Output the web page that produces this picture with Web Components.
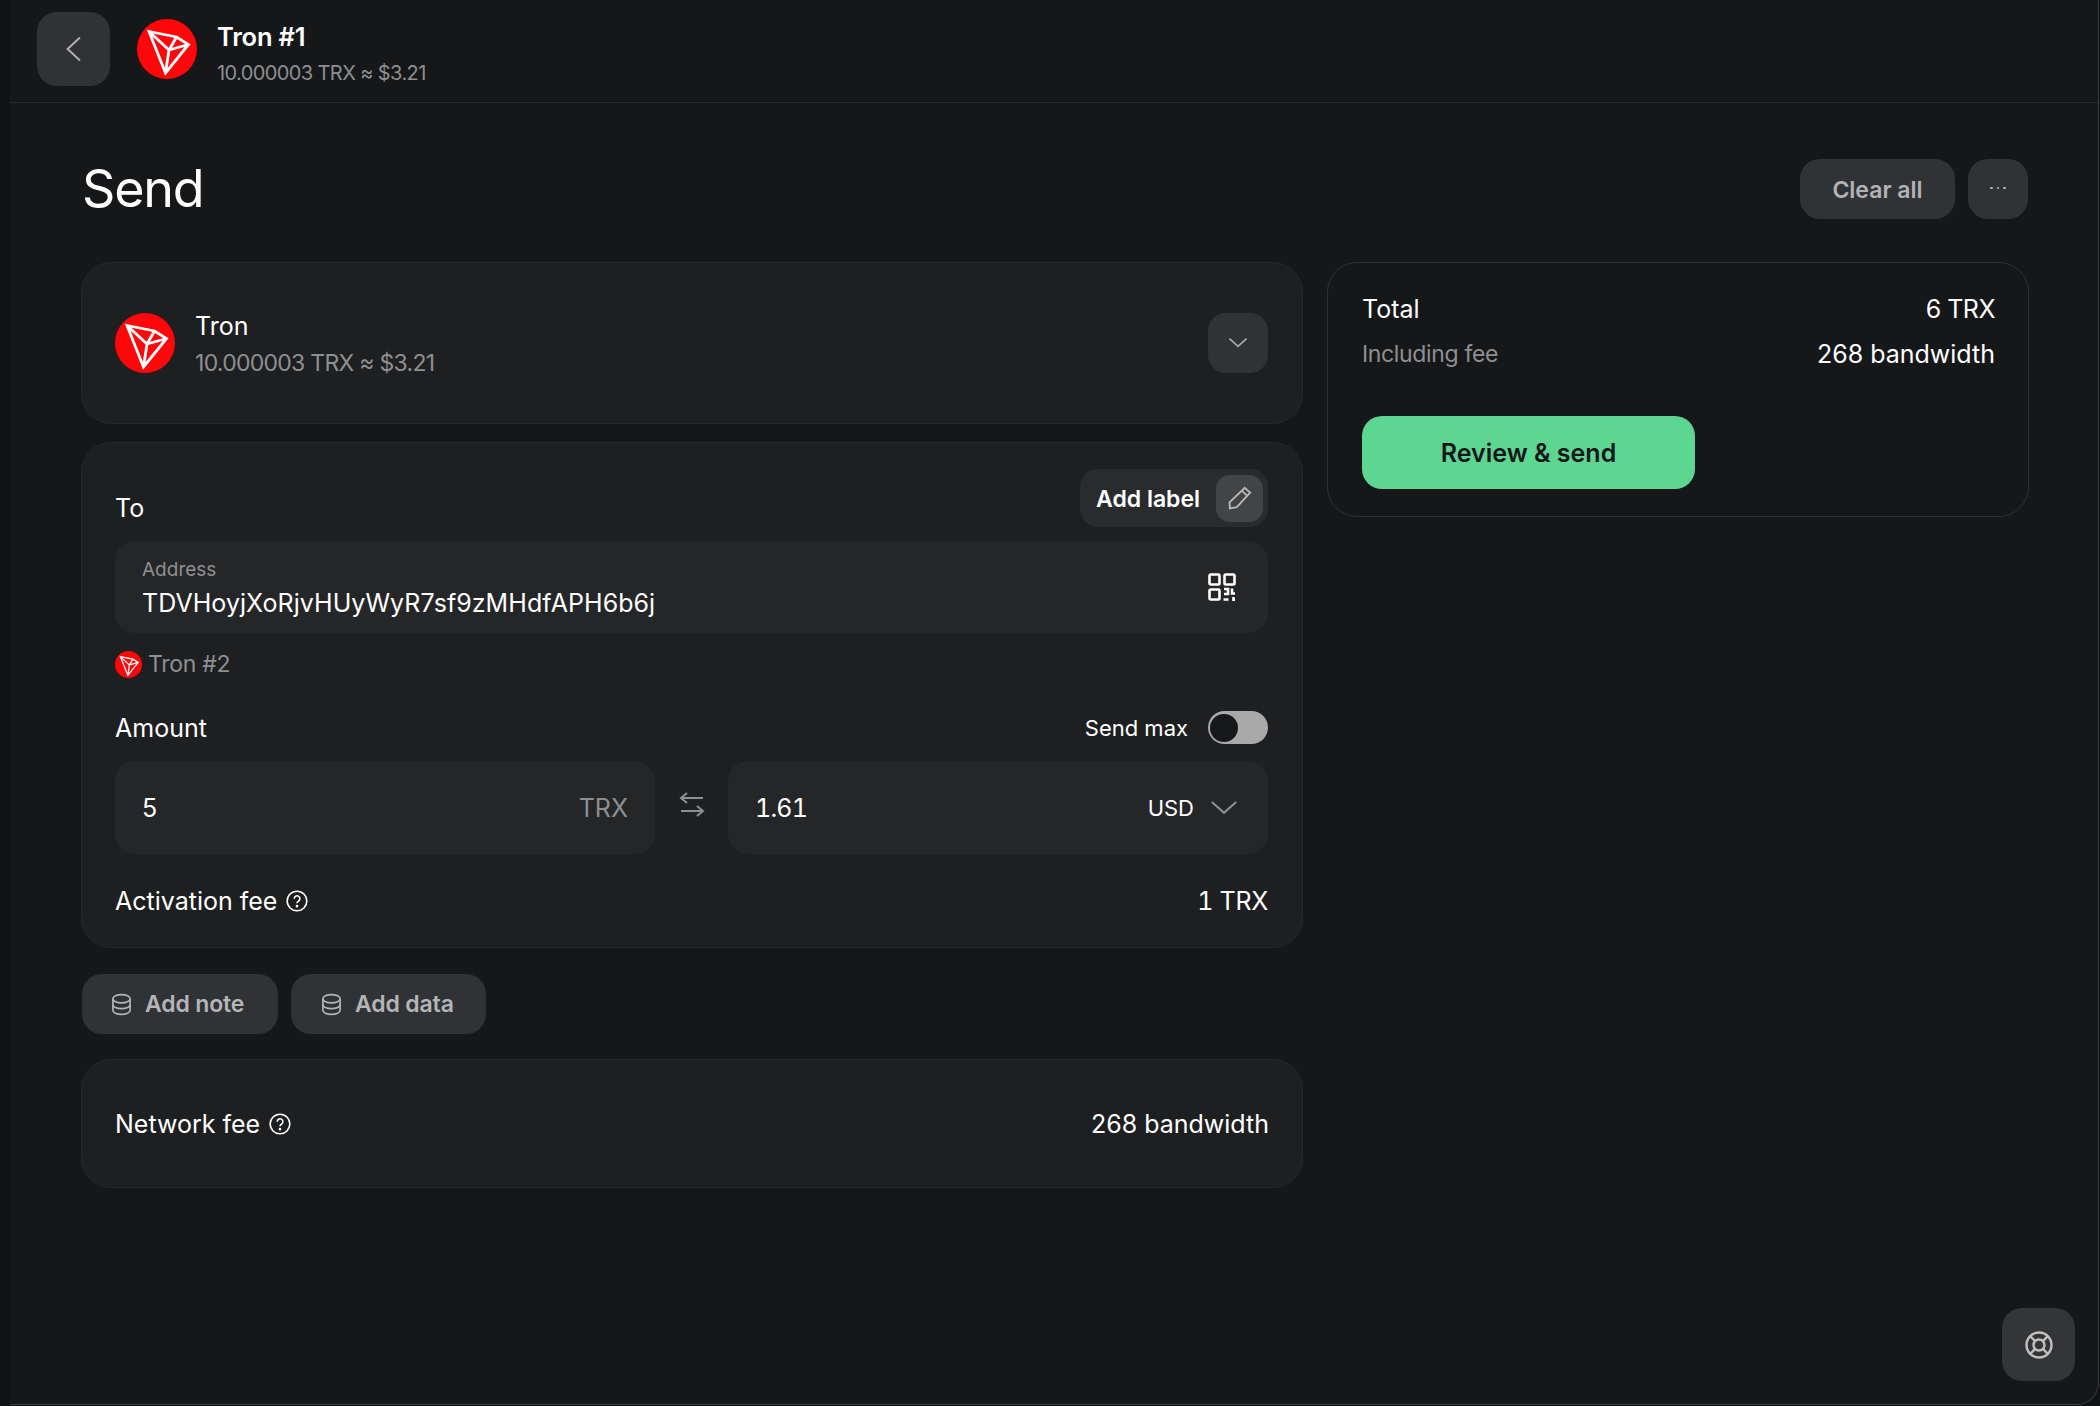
<!DOCTYPE html>
<html>
<head>
<meta charset="utf-8">
<title>Send</title>
<style>
  html, body { margin: 0; height: 100%; background: #101113; }
  body { font-family: Inter, "Liberation Sans", sans-serif; color: #fff; overflow: hidden; }
</style>
</head>
<body>
<wallet-window>
  <account-bar title="Tron #1" sub="10.000003 TRX ≈ $3.21"></account-bar>
  <send-header></send-header>
  <send-columns>
    <token-card slot="main" name="Tron" sub="10.000003 TRX ≈ $3.21"></token-card>
    <recipient-card slot="main"></recipient-card>
    <chip-row slot="main"></chip-row>
    <fee-card slot="main" label="Network fee" value="268 bandwidth"></fee-card>
    <summary-card slot="side"></summary-card>
  </send-columns>
  <help-button></help-button>
</wallet-window>

<script>
// icons
const ICONS = {
  back: '<path d="M20 2.500 7.500 14 20 25.500"/>',
  down: '<path d="M4 9l10 9 10-9"/>',
  pencil: '<path d="M18.500 4.500l5 4.500L11 22.500l-6.500 1.200-.3-5.700z"/><path d="M15.800 7.300l5 4.700"/>',
  qr: '<rect x="1.500" y="1.500" width="10" height="10" rx="1.200"/><rect x="16.500" y="1.500" width="10" height="10" rx="1.200"/><rect x="1.500" y="16.500" width="10" height="10" rx="1.200"/><path d="M16 16h4v5h-4M24 15.500v5h3M15.500 26.500h5M25.500 24v3h1.500"/>',
  swap: '<path d="M25 7H3M9 2 3 7l6 5"/><path d="M3 20h22M19 15l6 5-6 5"/>',
  help: '<circle cx="14" cy="14" r="12.500"/><path d="M10.500 11a3.600 3.600 0 1 1 5.600 3c-1.400.9-2.100 1.500-2.100 3"/><circle cx="14" cy="20.600" r=".7"/>',
  stack: '<ellipse cx="14" cy="7" rx="10.500" ry="5"/><path d="M3.500 7v14c0 2.800 4.700 5 10.500 5s10.500-2.200 10.500-5V7"/><path d="M3.500 14c0 2.800 4.700 5 10.500 5s10.500-2.200 10.500-5"/>',
  buoy: '<circle cx="14" cy="14" r="12.500"/><circle cx="14" cy="14" r="5.500"/><path d="M5.200 5.200l4.900 4.900M22.800 5.200l-4.900 4.900M5.200 22.800l4.900-4.900M22.800 22.800l-4.900-4.900"/>'
};

class UiIcon extends HTMLElement {
  connectedCallback() {
    const s = this.getAttribute('size') || 28;
    const w = this.getAttribute('weight') || 2;
    this.attachShadow({mode: 'open'}).innerHTML = `
      <style>
        :host { display: inline-flex; flex: none; color: inherit; }
        svg { display: block; fill: none; stroke: currentColor; stroke-width: ${w}; }
      </style>
      <svg width="${s}" height="${s}" viewBox="0 0 28 28">${ICONS[this.getAttribute('name')]}</svg>`;
  }
}
customElements.define('ui-icon', UiIcon);

class TronLogo extends HTMLElement {
  connectedCallback() {
    const s = this.getAttribute('size') || 60;
    this.attachShadow({mode: 'open'}).innerHTML = `
      <style>
        :host { display: inline-flex; flex: none; }
        svg { display: block; }
      </style>
      <svg width="${s}" height="${s}" viewBox="0 0 60 60">
        <circle cx="30" cy="30" r="30" fill="#ff060a"/>
        <g fill="none" stroke="#fff" stroke-width="2.800" stroke-linejoin="miter">
          <path d="M12 12.500 39.500 18 51.500 25.500 28.500 54z"/>
          <path d="M12 12.500 32 31 28.500 54"/>
          <path d="M32 31 39.500 18M32 31 51.500 25.500"/>
        </g>
      </svg>`;
  }
}
customElements.define('tron-logo', TronLogo);

class WalletWindow extends HTMLElement {
  constructor() {
    super();
    this.attachShadow({mode: 'open'}).innerHTML = `
      <style>
        :host {
          display: block;
          position: relative;
          box-sizing: border-box;
          height: 1405px;
          margin-left: 10px;
          width: 2089px;
          background: #161719;
          border-right: 1px solid #3a3b3d;
          border-bottom: 1px solid #3a3b3d;
          border-bottom-right-radius: 22px;
        }
      </style>
      <slot></slot>`;
  }
}
customElements.define('wallet-window', WalletWindow);

class AccountBar extends HTMLElement {
  connectedCallback() {
    this.attachShadow({mode: 'open'}).innerHTML = `
      <style>
        :host {
          display: flex;
          align-items: center;
          box-sizing: border-box;
          height: 103px;
          padding: 0 0 4px 27px;
          border-bottom: 1px solid #2a2b2d;
        }
        .back {
          width: 73px; height: 74px;
          border-radius: 20px;
          background: #313235;
          color: #b4b4b5;
          display: flex; align-items: center; justify-content: center;
        }
        tron-logo { margin-left: 27px; }
        .text { margin-left: 20px; padding-top: 9px; }
        .title { font-size: 25.500px; font-weight: 600; line-height: 32px; letter-spacing: -.2px; }
        .sub { font-size: 20px; line-height: 26px; margin-top: 7px; color: #8e8f91; letter-spacing: -.6px; }
      </style>
      <div class="back"><ui-icon name="back" size="28" weight="1.800"></ui-icon></div>
      <tron-logo></tron-logo>
      <div class="text">
        <div class="title">${this.getAttribute('title')}</div>
        <div class="sub">${this.getAttribute('sub')}</div>
      </div>`;
  }
}
customElements.define('account-bar', AccountBar);

class SendHeader extends HTMLElement {
  constructor() {
    super();
    this.attachShadow({mode: 'open'}).innerHTML = `
      <style>
        :host {
          display: flex;
          align-items: center;
          justify-content: space-between;
          box-sizing: border-box;
          height: 159px;
          padding: 13px 70px 0 72px;
        }
        h1 { margin: 0; font-size: 52px; font-weight: 400; line-height: 64px; letter-spacing: -1.200px; }
        .actions { display: flex; gap: 13px; }
        .btn {
          height: 60px;
          border-radius: 20px;
          background: #313235;
          color: #b2b3b4;
          font-size: 23px;
          font-weight: 600;
          display: flex; align-items: center; justify-content: center;
        }
        .clear { width: 155px; padding-top: 1px; box-sizing: border-box; }
        .more { width: 60px; padding-bottom: 2px; box-sizing: border-box; gap: 4px; }
        .more i { width: 2.500px; height: 2.500px; border-radius: 50%; background: #b2b3b4; }
      </style>
      <h1>Send</h1>
      <div class="actions">
        <div class="btn clear">Clear all</div>
        <div class="btn more"><i></i><i></i><i></i></div>
      </div>`;
  }
}
customElements.define('send-header', SendHeader);

class SendColumns extends HTMLElement {
  constructor() {
    super();
    this.attachShadow({mode: 'open'}).innerHTML = `
      <style>
        :host {
          display: grid;
          grid-template-columns: 1222px 702px;
          column-gap: 24px;
          align-items: start;
          padding-left: 71px;
        }
        .main { display: flex; flex-direction: column; }
      </style>
      <div class="main"><slot name="main"></slot></div>
      <div class="side"><slot name="side"></slot></div>`;
  }
}
customElements.define('send-columns', SendColumns);

const CARD_CSS = `
  box-sizing: border-box;
  background: #1e1f21;
  border: 1px solid #262729;
  border-radius: 30px;
`;

class TokenCard extends HTMLElement {
  connectedCallback() {
    this.attachShadow({mode: 'open'}).innerHTML = `
      <style>
        :host {
          ${CARD_CSS}
          display: flex;
          align-items: center;
          height: 162px;
          padding: 0 34px 0 33px;
          margin-bottom: 18px;
        }
        .text { margin-left: 20px; flex: 1; padding-top: 2px; }
        .name { font-size: 25px; line-height: 32px; }
        .sub { font-size: 23px; line-height: 30px; margin-top: 6px; color: #8e8f91; letter-spacing: -.72px; }
        .pick {
          width: 60px; height: 60px; border-radius: 18px;
          background: #313235; color: #a8a9aa;
          display: flex; align-items: center; justify-content: center;
        }
      </style>
      <tron-logo></tron-logo>
      <div class="text">
        <div class="name">${this.getAttribute('name')}</div>
        <div class="sub">${this.getAttribute('sub')}</div>
      </div>
      <div class="pick"><ui-icon name="down" size="24"></ui-icon></div>`;
  }
}
customElements.define('token-card', TokenCard);

class RecipientCard extends HTMLElement {
  constructor() {
    super();
    this.attachShadow({mode: 'open'}).innerHTML = `
      <style>
        :host {
          ${CARD_CSS}
          display: block;
          height: 506px;
          padding: 26px 34px 0 33px;
          margin-bottom: 26px;
        }
        .between { display: flex; align-items: center; justify-content: space-between; }
        .to { align-items: flex-end; height: 58px; }
        .to > span { font-size: 25px; line-height: 34px; padding-bottom: 2px; }
        .label {
          display: flex; align-items: center;
          box-sizing: border-box;
          height: 58px; width: 188px;
          padding: 0 5px 0 16px;
          border-radius: 18px;
          background: #2a2b2d;
          font-size: 23px; font-weight: 600;
          justify-content: space-between;
        }
        .label span { padding: 2px 0 0; }
        .label b {
          width: 47px; height: 47px; border-radius: 14px;
          background: #434445; color: #b9b9ba;
          display: flex; align-items: center; justify-content: center;
        }
        .field {
          box-sizing: border-box;
          background: #252628;
          border-radius: 20px;
          display: flex; align-items: center;
        }
        .address {
          margin-top: 14px;
          height: 92px;
          padding: 0 32px 0 27px;
          justify-content: space-between;
        }
        .address > div { padding-top: 3px; }
        .caption { font-size: 19px; line-height: 24px; color: #8e8f91; margin-bottom: 5px; }
        .value { font-size: 25px; line-height: 32px; letter-spacing: .05px; }
        .resolved {
          display: flex; align-items: center; gap: 6px;
          margin-top: 18px; height: 26px;
          color: #8e8f91; font-size: 23px; letter-spacing: -.3px;
        }
        .amount-row { margin-top: 34px; height: 33px; }
        .amount-row > span { font-size: 25px; }
        .max { display: flex; align-items: center; gap: 20px; font-size: 22px; }
        .toggle {
          width: 60px; height: 33px; border-radius: 17px;
          background: #a9a9aa;
          display: flex; align-items: center; padding-left: 2px; box-sizing: border-box;
        }
        .toggle i { width: 28px; height: 28px; border-radius: 50%; background: #17181b; }
        .pair { display: flex; align-items: center; margin-top: 17px; }
        .pair .field {
          width: 540px; height: 93px;
          padding: 0 27px;
          justify-content: space-between;
          font-size: 25px;
        }
        .swap { width: 73px; display: flex; justify-content: center; color: #8e8f91; padding-bottom: 6px; box-sizing: border-box; }
        .unit { color: #8e8f91; }
        .num { font-variant-numeric: tabular-nums; letter-spacing: -.3px; }
        .rate { font-variant-numeric: tabular-nums; letter-spacing: -.8px; }
        .currency { display: flex; align-items: center; gap: 13px; font-size: 22px; }
        .currency ui-icon { color: #8e8f91; }
        .fee { margin-top: 30px; height: 34px; font-size: 25px; }
        .fee div { display: flex; align-items: center; gap: 9px; }
      </style>
      <div class="between to">
        <span>To</span>
        <div class="label"><span>Add label</span><b><ui-icon name="pencil" size="30" weight="1.700"></ui-icon></b></div>
      </div>
      <div class="field address">
        <div>
          <div class="caption">Address</div>
          <div class="value">TDVHoyjXoRjvHUyWyR7sf9zMHdfAPH6b6j</div>
        </div>
        <ui-icon name="qr" size="28" weight="2.600"></ui-icon>
      </div>
      <div class="resolved"><tron-logo size="27"></tron-logo>Tron #2</div>
      <div class="between amount-row">
        <span>Amount</span>
        <div class="max">Send max<div class="toggle"><i></i></div></div>
      </div>
      <div class="pair">
        <div class="field"><span>5</span><span class="unit">TRX</span></div>
        <div class="swap"><ui-icon name="swap" size="28"></ui-icon></div>
        <div class="field"><span class="rate">1.61</span><div class="currency">USD<ui-icon name="down" size="34" weight="1.700"></ui-icon></div></div>
      </div>
      <div class="between fee">
        <div>Activation fee <ui-icon name="help" size="22"></ui-icon></div>
        <span class="num">1 TRX</span>
      </div>`;
  }
}
customElements.define('recipient-card', RecipientCard);

class ChipRow extends HTMLElement {
  constructor() {
    super();
    this.attachShadow({mode: 'open'}).innerHTML = `
      <style>
        :host { display: flex; gap: 13px; margin: 0 0 25px 1px; }
        .chip {
          box-sizing: border-box;
          height: 60px;
          border-radius: 20px;
          background: #313235;
          color: #b4b5b6;
          font-size: 23px; font-weight: 600;
          display: flex; align-items: center; gap: 12px;
          letter-spacing: -.15px;
        }
        .note { width: 196px; padding-left: 28px; }
        .data { width: 195px; padding-left: 29px; }
      </style>
      <div class="chip note"><ui-icon name="stack" size="23"></ui-icon>Add note</div>
      <div class="chip data"><ui-icon name="stack" size="23"></ui-icon>Add data</div>`;
  }
}
customElements.define('chip-row', ChipRow);

class FeeCard extends HTMLElement {
  connectedCallback() {
    this.attachShadow({mode: 'open'}).innerHTML = `
      <style>
        :host {
          ${CARD_CSS}
          display: flex;
          align-items: center;
          justify-content: space-between;
          height: 129px;
          padding: 0 33px;
          font-size: 25px;
        }
        div { display: flex; align-items: center; gap: 9px; }
      </style>
      <div>${this.getAttribute('label')} <ui-icon name="help" size="22"></ui-icon></div>
      <span>${this.getAttribute('value')}</span>`;
  }
}
customElements.define('fee-card', FeeCard);

class SummaryCard extends HTMLElement {
  constructor() {
    super();
    this.attachShadow({mode: 'open'}).innerHTML = `
      <style>
        :host {
          display: block;
          box-sizing: border-box;
          height: 255px;
          padding: 29px 33px 0 34px;
          border: 1px solid #2f3032;
          border-radius: 30px;
        }
        .row { display: flex; align-items: center; justify-content: space-between; font-size: 25px; line-height: 34px; }
        .row + .row { margin-top: 11px; }
        .tight { letter-spacing: -.5px; }
        .muted { color: #8e8f91; font-size: 23px; letter-spacing: -.35px; }
        .review {
          margin-top: 45px;
          width: 333px; height: 73px;
          border-radius: 20px;
          background: #5cd690;
          color: #15171a;
          font-size: 25px; font-weight: 600;
          display: flex; align-items: center; justify-content: center;
        }
      </style>
      <div class="row"><span>Total</span><span class="tight">6 TRX</span></div>
      <div class="row"><span class="muted">Including fee</span><span>268 bandwidth</span></div>
      <div class="review">Review &amp; send</div>`;
  }
}
customElements.define('summary-card', SummaryCard);

class HelpButton extends HTMLElement {
  constructor() {
    super();
    this.attachShadow({mode: 'open'}).innerHTML = `
      <style>
        :host {
          position: absolute;
          right: 23px;
          bottom: 23px;
          width: 73px; height: 73px;
          border-radius: 20px;
          background: #343537;
          color: #c0c0c1;
          display: flex; align-items: center; justify-content: center;
        }
      </style>
      <ui-icon name="buoy" size="28" weight="2.400"></ui-icon>`;
  }
}
customElements.define('help-button', HelpButton);
</script>
</body>
</html>
